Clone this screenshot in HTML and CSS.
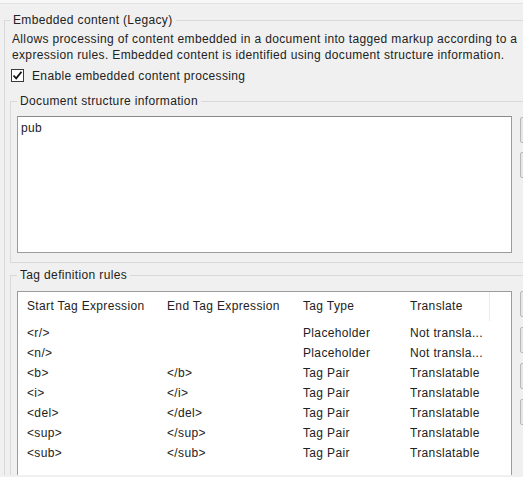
FILE: index.html
```html
<!DOCTYPE html>
<html lang="en">
<head>
<meta charset="utf-8">
<title>Embedded content</title>
<link rel="stylesheet" href="styles.css">
</head>
<body>
<div class="topstrip"></div>
<fieldset class="group outer">
  <legend>Embedded content (Legacy)</legend>
  <p class="desc">Allows processing of content embedded in a document into tagged markup according to a<br>expression rules. Embedded content is identified using document structure information.</p>
  <label class="check">
    <span class="box"><svg width="11" height="11" viewBox="0 0 11 11"><path d="M1.5 5.5 L4.2 8.3 L9.5 1.8" fill="none" stroke="#111" stroke-width="1.8"/></svg></span>
    <span>Enable embedded content processing</span>
  </label>

  <fieldset class="group inner doc">
    <legend>Document structure information</legend>
    <div class="row">
      <div class="textbox">pub</div>
      <div class="buttons">
        <div class="btn"></div>
        <div class="btn"></div>
      </div>
    </div>
  </fieldset>

  <fieldset class="group inner tags">
    <legend>Tag definition rules</legend>
    <div class="row">
      <div class="list">
        <div class="lrow head">
          <span>Start Tag Expression</span><span>End Tag Expression</span><span>Tag Type</span><span class="lastcol">Translate</span>
        </div>
        <div class="lrow"><span>&lt;r/&gt;</span><span></span><span>Placeholder</span><span>Not transla...</span></div>
        <div class="lrow"><span>&lt;n/&gt;</span><span></span><span>Placeholder</span><span>Not transla...</span></div>
        <div class="lrow"><span>&lt;b&gt;</span><span>&lt;/b&gt;</span><span>Tag Pair</span><span>Translatable</span></div>
        <div class="lrow"><span>&lt;i&gt;</span><span>&lt;/i&gt;</span><span>Tag Pair</span><span>Translatable</span></div>
        <div class="lrow"><span>&lt;del&gt;</span><span>&lt;/del&gt;</span><span>Tag Pair</span><span>Translatable</span></div>
        <div class="lrow"><span>&lt;sup&gt;</span><span>&lt;/sup&gt;</span><span>Tag Pair</span><span>Translatable</span></div>
        <div class="lrow"><span>&lt;sub&gt;</span><span>&lt;/sub&gt;</span><span>Tag Pair</span><span>Translatable</span></div>
      </div>
      <div class="buttons tagbtns">
        <div class="btn"></div>
        <div class="btn"></div>
        <div class="btn"></div>
        <div class="btn"></div>
      </div>
    </div>
  </fieldset>
</fieldset>
</body>
</html>
```
FILE: styles.css
```css
html, body {
  margin: 0;
  padding: 0;
  width: 523px;
  height: 477px;
  overflow: hidden;
  background: #f0f0f0;
  font-family: "Liberation Sans", Arial, sans-serif;
  font-size: 12px;
  letter-spacing: 0.35px;
  color: #222;
}

.topstrip {
  height: 3px;
  background: #f7f7f7;
  border-bottom: 1px solid #e2e2e2;
}

.group {
  margin: 0;
  border: 1px solid #d9d9d9;
  border-right: none;
  border-bottom: none;
}

.group > legend {
  padding: 0 3px;
  line-height: 16px;
}

.outer {
  margin-top: 8px;
  margin-left: 4px;
  width: 513px;
  padding: 0 0 0 5px;
  height: 462px;
  overflow: hidden;
}

.desc {
  margin: 3px 0 0 2px;
  line-height: 16px;
  white-space: nowrap;
  overflow: hidden;
}

.check {
  display: flex;
  align-items: center;
  gap: 8px;
  margin: 6px 0 0 1px;
  height: 13px;
}

.box {
  width: 11px;
  height: 11px;
  border: 1px solid #3a3a3a;
  background: #fff;
  display: flex;
}

.inner {
  width: 506px;
  padding: 0 0 0 6px;
  overflow: hidden;
}

.doc {
  margin-top: 11px;
  padding-top: 7px;
  padding-bottom: 9px;
  border-bottom: 1px solid #d9d9d9;
}

.tags {
  margin-top: 4px;
  padding-top: 8px;
  height: 200px;
}

.row {
  display: flex;
  gap: 8px;
  align-items: flex-start;
}

.textbox {
  flex: none;
  width: 487px;
  height: 129px;
  border: 1px solid #9c9c9c;
  border-top-color: #8a8a8a;
  background: #fff;
  padding: 3px;
  line-height: 16px;
}

.buttons {
  flex: none;
  display: flex;
  flex-direction: column;
  gap: 9px;
  margin-top: 1px;
}

.tagbtns {
  margin-top: 0;
  gap: 10px;
}

.btn {
  width: 75px;
  height: 24px;
  border: 1px solid #b9b9b9;
  border-radius: 2px;
  background: #e6e6e6;
}

.list {
  flex: none;
  width: 493px;
  height: 220px;
  border: 1px solid #9c9c9c;
  background: #fff;
}

.lrow {
  display: grid;
  grid-template-columns: 140px 136px 107px 80px;
  padding-left: 9px;
  height: 20px;
  line-height: 20px;
  white-space: nowrap;
}

.lrow.head {
  height: 29px;
  line-height: 29px;
  margin-bottom: 2px;
}

.lastcol {
  border-right: 1px solid #ececec;
}
```
